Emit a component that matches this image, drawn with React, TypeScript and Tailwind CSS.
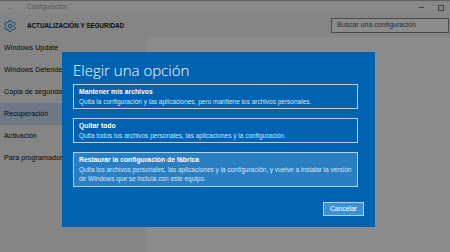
import { Settings } from 'lucide-react'

const SIDEBAR = [
  'Windows Update',
  'Windows Defender',
  'Copia de seguridad',
  'Recuperación',
  'Activación',
  'Para programadores',
]

const OPTIONS = [
  {
    title: 'Mantener mis archivos',
    desc: ['Quita la configuración y las aplicaciones, pero mantiene los archivos personales.'],
  },
  {
    title: 'Quitar todo',
    desc: ['Quita todos los archivos personales, las aplicaciones y la configuración.'],
  },
  {
    title: 'Restaurar la configuración de fábrica',
    desc: [
      'Quita los archivos personales, las aplicaciones y la configuración, y vuelve a instalar la versión',
      'de Windows que se incluía con este equipo.',
    ],
    active: true,
  },
]

function TitleBar() {
  return (
    <div className="flex h-[14px] items-center border-t border-[#b0b0b0] bg-[#f8f8f8] text-[#9a9a9a]">
      <span className="ml-[7px] w-[20px] text-[7px] leading-none">←</span>
      <span className="text-[6.5px] leading-none">Configuración</span>
      <div className="ml-auto mr-[6px] flex items-center gap-[14px]">
        <span className="h-px w-[5px] bg-[#777]" />
        <span className="h-[6px] w-[6px] border border-[#777]" />
      </div>
    </div>
  )
}

function Header() {
  return (
    <div className="flex h-[23px] items-center bg-[#f2f2f2]">
      <Settings className="ml-[3px] h-[14px] w-[14px] text-[#0078d7]" strokeWidth={1.5} />
      <span className="ml-[10px] text-[6.3px] font-bold text-[#111]">ACTUALIZACIÓN Y SEGURIDAD</span>
      <div className="ml-auto mr-px flex h-[15px] w-[118px] items-center border border-[#8a8a8a] bg-white px-[5px] text-[7px] text-[#555]">
        Buscar una configuración
      </div>
    </div>
  )
}

function Sidebar() {
  return (
    <div className="w-[146px] bg-[#f2f2f2]">
      {SIDEBAR.map((item) => (
        <div
          key={item}
          className={`flex h-[22px] items-center pl-[4px] text-[7.2px] text-[#111] ${
            item === 'Recuperación' ? 'bg-[#c6dff3]' : ''
          }`}
        >
          {item}
        </div>
      ))}
    </div>
  )
}

function Dialog() {
  return (
    <div className="absolute left-[62px] top-[52px] flex h-[175px] w-[313px] flex-col bg-[#0063b1] pl-[11px] pt-[9px]">
      <div
        className="h-[18px] text-[15px] font-light leading-[18px] text-white"
        style={{ fontFamily: '"Open Sans", "Liberation Sans", sans-serif' }}
      >
        Elegir una opción
      </div>
      <div className="mt-[5px] flex w-[285px] flex-col gap-[9px]">
        {OPTIONS.map((opt) => (
          <div
            key={opt.title}
            className={`border border-[#b3d1ec] px-[5px] py-[2px] ${opt.active ? 'bg-[#2a7fc2]' : ''}`}
          >
            <div className="text-[6.8px] font-bold leading-[9.5px] text-white">{opt.title}</div>
            {opt.desc.map((line) => (
              <div key={line} className="whitespace-nowrap text-[6.5px] leading-[9.5px] text-[#d3e5f5]">
                {line}
              </div>
            ))}
          </div>
        ))}
      </div>
      <div className="mt-auto flex justify-end pb-[11px] pr-[11px]">
        <div className="flex h-[14px] w-[41px] items-center justify-center border border-[#b3d1ec] bg-[#3f90d2] text-[6.8px] text-white">
          Cancelar
        </div>
      </div>
    </div>
  )
}

export default function App() {
  return (
    <div
      className="relative h-[252px] w-[450px] overflow-hidden bg-[#f2f2f2]"
      style={{ fontFamily: '"Liberation Sans", Arial, sans-serif' }}
    >
      <TitleBar />
      <Header />
      <div className="flex h-[215px]">
        <Sidebar />
        <div className="flex-1 bg-white pl-[12px] pt-[10px]">
          <div className="text-[13px] text-[#111]">Restablecer este PC</div>
        </div>
      </div>
      <div className="absolute inset-0 bg-black/45" />
      <Dialog />
    </div>
  )
}
